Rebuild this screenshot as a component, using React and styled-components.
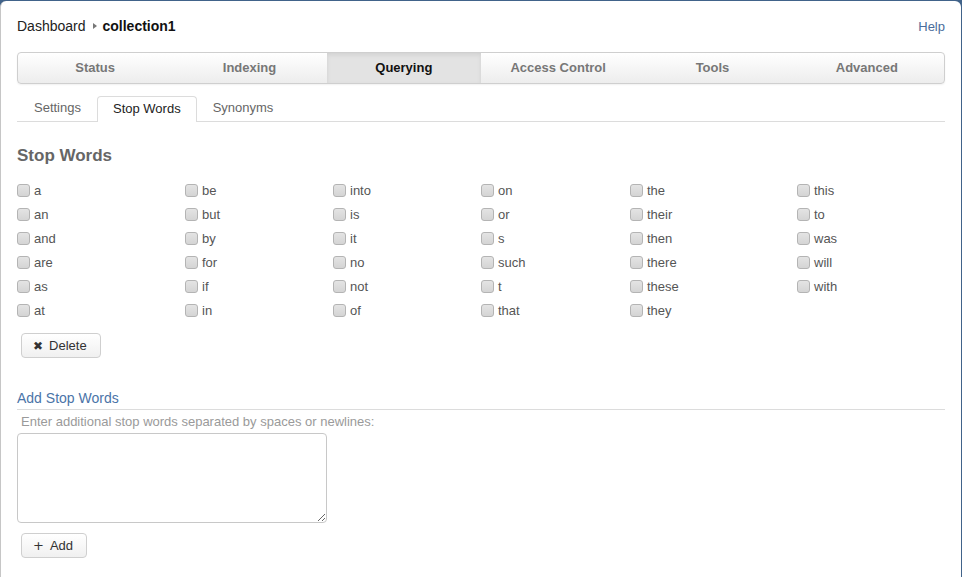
import React from "react";
import styled, { createGlobalStyle } from "styled-components";

const Global = createGlobalStyle`
  html, body { margin: 0; padding: 0; }
  body {
    background: #41638a;
    font-family: "Liberation Sans", Arial, sans-serif;
    overflow: hidden;
  }
  #root { padding: 1px 1px 0 0; }
`;

const Panel = styled.div`
  background: #fff;
  border-left: 1px solid #c6c6c6;
  border-radius: 6px 6px 0 0;
  min-height: 600px;
  padding: 15px 16px 0 16px;
  box-sizing: border-box;
`;

const Header = styled.div`
  display: flex;
  justify-content: space-between;
  align-items: center;
  height: 20px;
`;

const Crumbs = styled.div`
  display: flex;
  align-items: center;
  font-size: 14px;
  color: #222;
`;

const Arrow = styled.span`
  display: inline-block;
  width: 0;
  height: 0;
  border-top: 3.5px solid transparent;
  border-bottom: 3.5px solid transparent;
  border-left: 4px solid #777;
  margin: 0 6px 0 7px;
`;

const Strong = styled.span`
  font-weight: bold;
  color: #111;
`;

const HelpLink = styled.a`
  font-size: 13px;
  color: #4a6c9b;
  text-decoration: none;
`;

const MainTabs = styled.div`
  display: grid;
  grid-template-columns: repeat(6, 1fr);
  margin-top: 16px;
  height: 30px;
  border: 1px solid #cfcfcf;
  border-radius: 4px;
  background: linear-gradient(#ffffff, #ededed);
  box-shadow: 0 1px 2px rgba(0, 0, 0, 0.06);
  overflow: hidden;
`;

const MainTab = styled.div`
  display: flex;
  align-items: center;
  justify-content: center;
  padding-bottom: 2px;
  font-size: 13px;
  font-weight: bold;
  color: ${(p) => (p.$active ? "#111" : "#777")};
  background: ${(p) => (p.$active ? "#e3e3e3" : "transparent")};
  box-shadow: ${(p) => (p.$active ? "inset 0 2px 4px rgba(0,0,0,0.08)" : "none")};
`;

const SubTabs = styled.div`
  display: flex;
  align-items: flex-end;
  margin-top: 12px;
  border-bottom: 1px solid #dcdcdc;
  height: 25px;
`;

const SubTab = styled.div`
  display: flex;
  align-items: center;
  font-size: 13px;
  padding: 0 15px 3px ${(p) => (p.$first ? "16px" : "15px")};
  color: ${(p) => (p.$active ? "#222" : "#666")};
  background: ${(p) => (p.$active ? "#fff" : "transparent")};
  border: 1px solid ${(p) => (p.$active ? "#dcdcdc" : "transparent")};
  border-bottom: none;
  border-radius: 4px 4px 0 0;
  margin-bottom: ${(p) => (p.$active ? "-1px" : "0")};
  height: ${(p) => (p.$active ? "26px" : "25px")};
  box-sizing: border-box;
`;

const Heading = styled.h2`
  margin: 24px 0 0 0;
  font-size: 17px;
  line-height: 20px;
  font-weight: bold;
  color: #666;
`;

const WordGrid = styled.div`
  display: grid;
  grid-template-columns: 168px 148px 148px 149px 167px 1fr;
  grid-template-rows: repeat(6, 24px);
  grid-auto-flow: column;
  margin-top: 12px;
`;

const WordLabel = styled.label`
  display: flex;
  align-items: center;
  font-size: 13px;
  color: #555;
`;

const Check = styled.input.attrs({ type: "checkbox" })`
  appearance: none;
  margin: 0 4px 0 0;
  width: 13px;
  height: 13px;
  border: 1px solid #b4b4b4;
  border-radius: 3px;
  background: linear-gradient(#e4e4e4, #d4d4d4);
  box-sizing: border-box;
`;

const Button = styled.button`
  display: inline-flex;
  align-items: center;
  gap: 6px;
  height: 25px;
  padding: 0 13px 0 11px;
  margin-left: 4px;
  font-family: "Liberation Sans", Arial, sans-serif;
  font-size: 13px;
  color: #333;
  border: 1px solid #cfcfcf;
  border-radius: 4px;
  background: linear-gradient(#ffffff, #f0f0f0);
  cursor: pointer;
`;

const Icon = styled.span`
  font-family: "DejaVu Sans", sans-serif;
  font-size: ${(p) => p.$size || 12}px;
  color: #333;
  line-height: 1;
`;

const DeleteRow = styled.div`
  margin-top: 11px;
`;

const SectionTitle = styled.div`
  margin-top: 31px;
  font-size: 14px;
  line-height: 18px;
  color: #4a74a8;
  padding-bottom: 2px;
  border-bottom: 1px solid #dcdcdc;
`;

const Hint = styled.div`
  margin: 4px 0 0 4px;
  font-size: 13px;
  color: #9a9a9a;
`;

const TextArea = styled.textarea`
  display: block;
  margin-top: 4px;
  width: 310px;
  height: 90px;
  box-sizing: border-box;
  border: 1px solid #c8c8c8;
  border-radius: 4px;
  resize: both;
`;

const AddRow = styled.div`
  margin-top: 10px;
`;

const words = [
  "a", "an", "and", "are", "as", "at",
  "be", "but", "by", "for", "if", "in",
  "into", "is", "it", "no", "not", "of",
  "on", "or", "s", "such", "t", "that",
  "the", "their", "then", "there", "these", "they",
  "this", "to", "was", "will", "with",
];

const tabs = ["Status", "Indexing", "Querying", "Access Control", "Tools", "Advanced"];

export default function App() {
  return (
    <>
      <Global />
      <Panel>
        <Header>
          <Crumbs>
            Dashboard
            <Arrow />
            <Strong>collection1</Strong>
          </Crumbs>
          <HelpLink href="#">Help</HelpLink>
        </Header>
        <MainTabs>
          {tabs.map((t) => (
            <MainTab key={t} $active={t === "Querying"}>
              {t}
            </MainTab>
          ))}
        </MainTabs>
        <SubTabs>
          <SubTab $first>Settings</SubTab>
          <SubTab $active>Stop Words</SubTab>
          <SubTab>Synonyms</SubTab>
        </SubTabs>
        <Heading>Stop Words</Heading>
        <WordGrid>
          {words.map((w) => (
            <WordLabel key={w}>
              <Check />
              {w}
            </WordLabel>
          ))}
        </WordGrid>
        <DeleteRow>
          <Button>
            <Icon>✖</Icon>
            Delete
          </Button>
        </DeleteRow>
        <SectionTitle>Add Stop Words</SectionTitle>
        <Hint>Enter additional stop words separated by spaces or newlines:</Hint>
        <TextArea />
        <AddRow>
          <Button>
            <Icon $size={13}>+</Icon>
            Add
          </Button>
        </AddRow>
      </Panel>
    </>
  );
}
